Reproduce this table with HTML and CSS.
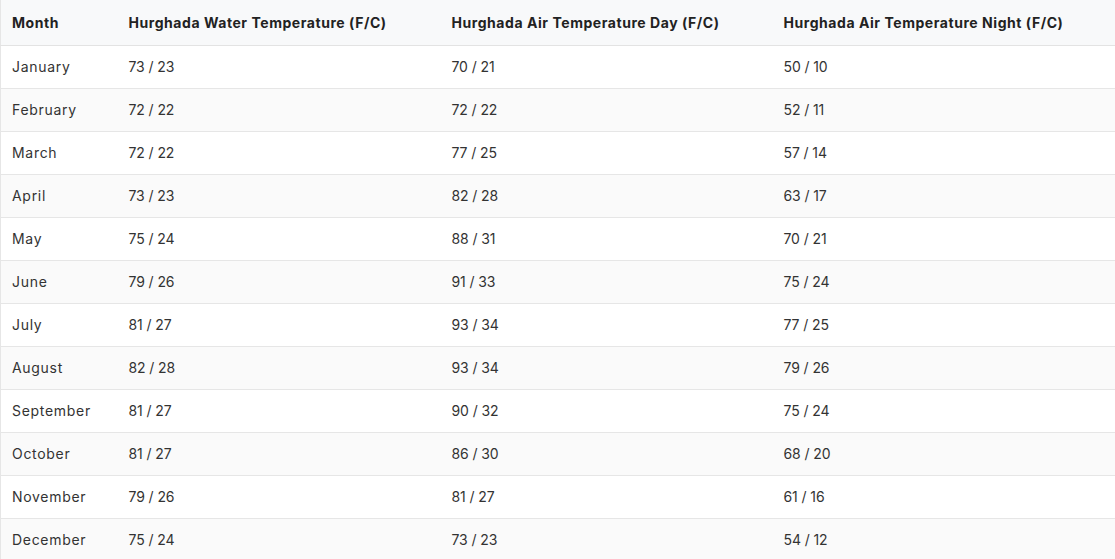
FILE: index.html
```html
<!DOCTYPE html>
<html>
<head>
<meta charset="utf-8">
<link rel="stylesheet" href="styles.css">
</head>
<body>
<table class="temps">
<colgroup>
<col class="c1"><col class="c2"><col class="c3"><col class="c4">
</colgroup>
<thead>
<tr><th>Month</th><th>Hurghada Water Temperature (F/C)</th><th>Hurghada Air Temperature Day (F/C)</th><th>Hurghada Air Temperature Night (F/C)</th></tr>
</thead>
<tbody>
<tr><td>January</td><td>73 / 23</td><td>70 / 21</td><td>50 / 10</td></tr>
<tr><td>February</td><td>72 / 22</td><td>72 / 22</td><td>52 / 11</td></tr>
<tr><td>March</td><td>72 / 22</td><td>77 / 25</td><td>57 / 14</td></tr>
<tr><td>April</td><td>73 / 23</td><td>82 / 28</td><td>63 / 17</td></tr>
<tr><td>May</td><td>75 / 24</td><td>88 / 31</td><td>70 / 21</td></tr>
<tr><td>June</td><td>79 / 26</td><td>91 / 33</td><td>75 / 24</td></tr>
<tr><td>July</td><td>81 / 27</td><td>93 / 34</td><td>77 / 25</td></tr>
<tr><td>August</td><td>82 / 28</td><td>93 / 34</td><td>79 / 26</td></tr>
<tr><td>September</td><td>81 / 27</td><td>90 / 32</td><td>75 / 24</td></tr>
<tr><td>October</td><td>81 / 27</td><td>86 / 30</td><td>68 / 20</td></tr>
<tr><td>November</td><td>79 / 26</td><td>81 / 27</td><td>61 / 16</td></tr>
<tr><td>December</td><td>75 / 24</td><td>73 / 23</td><td>54 / 12</td></tr>
</tbody>
</table>
</body>
</html>
```
FILE: styles.css
```css
html, body {
  margin: 0;
  padding: 0;
  background: #fff;
}
body {
  font-family: "Inter", "Open Sans", "Liberation Sans", sans-serif;
  color: #2b2b2b;
}
.temps {
  width: 1116px;
  border-collapse: collapse;
  table-layout: fixed;
  border-left: 1px solid #e6e6e6;
}
.c1 { width: 117px; }
.c2 { width: 323px; }
.c3 { width: 332px; }
.c4 { width: 344px; }
.temps th {
  background: #f8f9fa;
  font-weight: 700;
  font-size: 14px;
  letter-spacing: 0.55px;
  color: #222;
  text-align: left;
  height: 45px;
  padding: 0 11px;
  border-bottom: 1px solid #e3e3e3;
  white-space: nowrap;
}
.temps td {
  font-size: 14px;
  font-weight: 400;
  letter-spacing: 0.7px;
  color: #333;
  height: 40px;
  padding: 0 11px 2px;
  border-bottom: 1px solid #e6e6e6;
  white-space: nowrap;
}
.temps td + td {
  letter-spacing: -0.1px;
}
.temps tbody tr:nth-child(even) td {
  background: #fafafa;
}
```
